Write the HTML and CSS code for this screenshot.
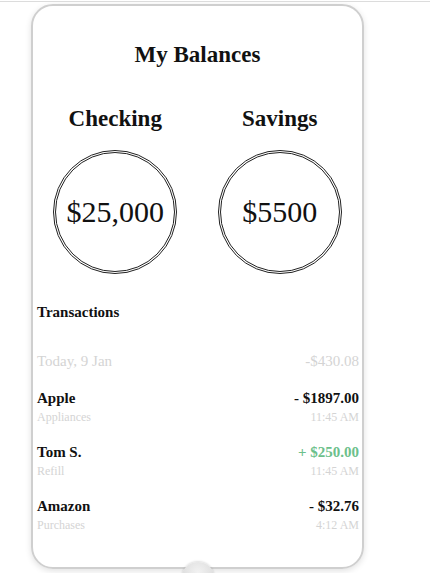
FILE: index.html
```html
<!DOCTYPE html>
<html lang="en">
<head>
  <meta charset="UTF-8" />
  <meta name="viewport" content="width=device-width, initial-scale=1.0"/>
  <title>My Balances</title>
  <link rel="stylesheet" href="styles.css">
</head>
<body>

  <div class="screen">
    <div class="phone">
      <h1>My Balances</h1>

      <div class="accounts">
        <div class="account">
          <h2>Checking</h2>
          <div class="balance">$25,000</div>
        </div>
        <div class="account">
          <h2>Savings</h2>
          <div class="balance">$5500</div>
        </div>
      </div>

      <div class="transactions">
        <h3>Transactions</h3>

        <div class="day">
          <span>Today, 9 Jan</span>
          <span>-$430.08</span>
        </div>

        <div class="item">
          <div class="row main">
            <span>Apple</span>
            <span>- $1897.00</span>
          </div>
          <div class="row sub">
            <span>Appliances</span>
            <span>11:45 AM</span>
          </div>
        </div>

        <div class="item">
          <div class="row main">
            <span>Tom S.</span>
            <span class="plus">+ $250.00</span>
          </div>
          <div class="row sub">
            <span>Refill</span>
            <span>11:45 AM</span>
          </div>
        </div>

        <div class="item">
          <div class="row main">
            <span>Amazon</span>
            <span>- $32.76</span>
          </div>
          <div class="row sub">
            <span>Purchases</span>
            <span>4:12 AM</span>
          </div>
        </div>
      </div>

      <div class="home-button"></div>
    </div>
  </div>

</body>
</html>
```

FILE: styles.css
```css
:root {
  --text: #111;
  --muted: #d4d4d4;
  --green: #6cc08b;
  --frame: #cfcfcf;
}

html, body {
  margin: 0;
  height: 100%;
  overflow: hidden;
}

body {
  font-family: 'Liberation Serif', 'Times New Roman', serif;
  color: var(--text);
  background: #fff;
}

.screen {
  height: 573px;
  overflow: hidden;
  margin-top: 1px;
  border-top: 1px solid #dcdcdc;
  padding-top: 2px;
  box-sizing: border-box;
}

.phone {
  position: relative;
  width: 329px;
  height: 561px;
  margin-left: 31px;
  border: 2px solid var(--frame);
  border-radius: 22px;
  box-shadow: 0 2px 6px rgba(0, 0, 0, 0.12);
}

h1 {
  font-size: 23px;
  text-align: center;
  margin: 36px 0 0;
}

.accounts {
  display: grid;
  grid-template-columns: 1fr 1fr;
  margin-top: 38px;
}

.account {
  display: flex;
  flex-direction: column;
  align-items: center;
}

h2 {
  font-size: 23px;
  margin: 0 0 18px;
}

.balance {
  width: 118px;
  height: 118px;
  border: 3px double #222;
  border-radius: 50%;
  display: flex;
  align-items: center;
  justify-content: center;
  font-size: 30px;
}

.transactions {
  padding: 0 3px 0 4px;
  margin-top: 30px;
}

h3 {
  font-size: 15px;
  margin: 0 0 32px;
}

.day,
.row {
  display: flex;
  justify-content: space-between;
}

.day {
  font-size: 15px;
  color: var(--muted);
  margin-bottom: 20px;
}

.item {
  margin-bottom: 19px;
}

.main {
  font-size: 15px;
  font-weight: bold;
}

.sub {
  font-size: 12px;
  color: var(--muted);
  margin-top: 3px;
}

.plus {
  color: var(--green);
}

.home-button {
  position: absolute;
  left: 50%;
  top: 556px;
  width: 34px;
  height: 34px;
  margin-left: -17px;
  border-radius: 50%;
  background: radial-gradient(circle at 50% 30%, #f2f2f2, #cfcfcf);
  box-shadow: 0 -1px 2px rgba(0, 0, 0, 0.12);
}
```
